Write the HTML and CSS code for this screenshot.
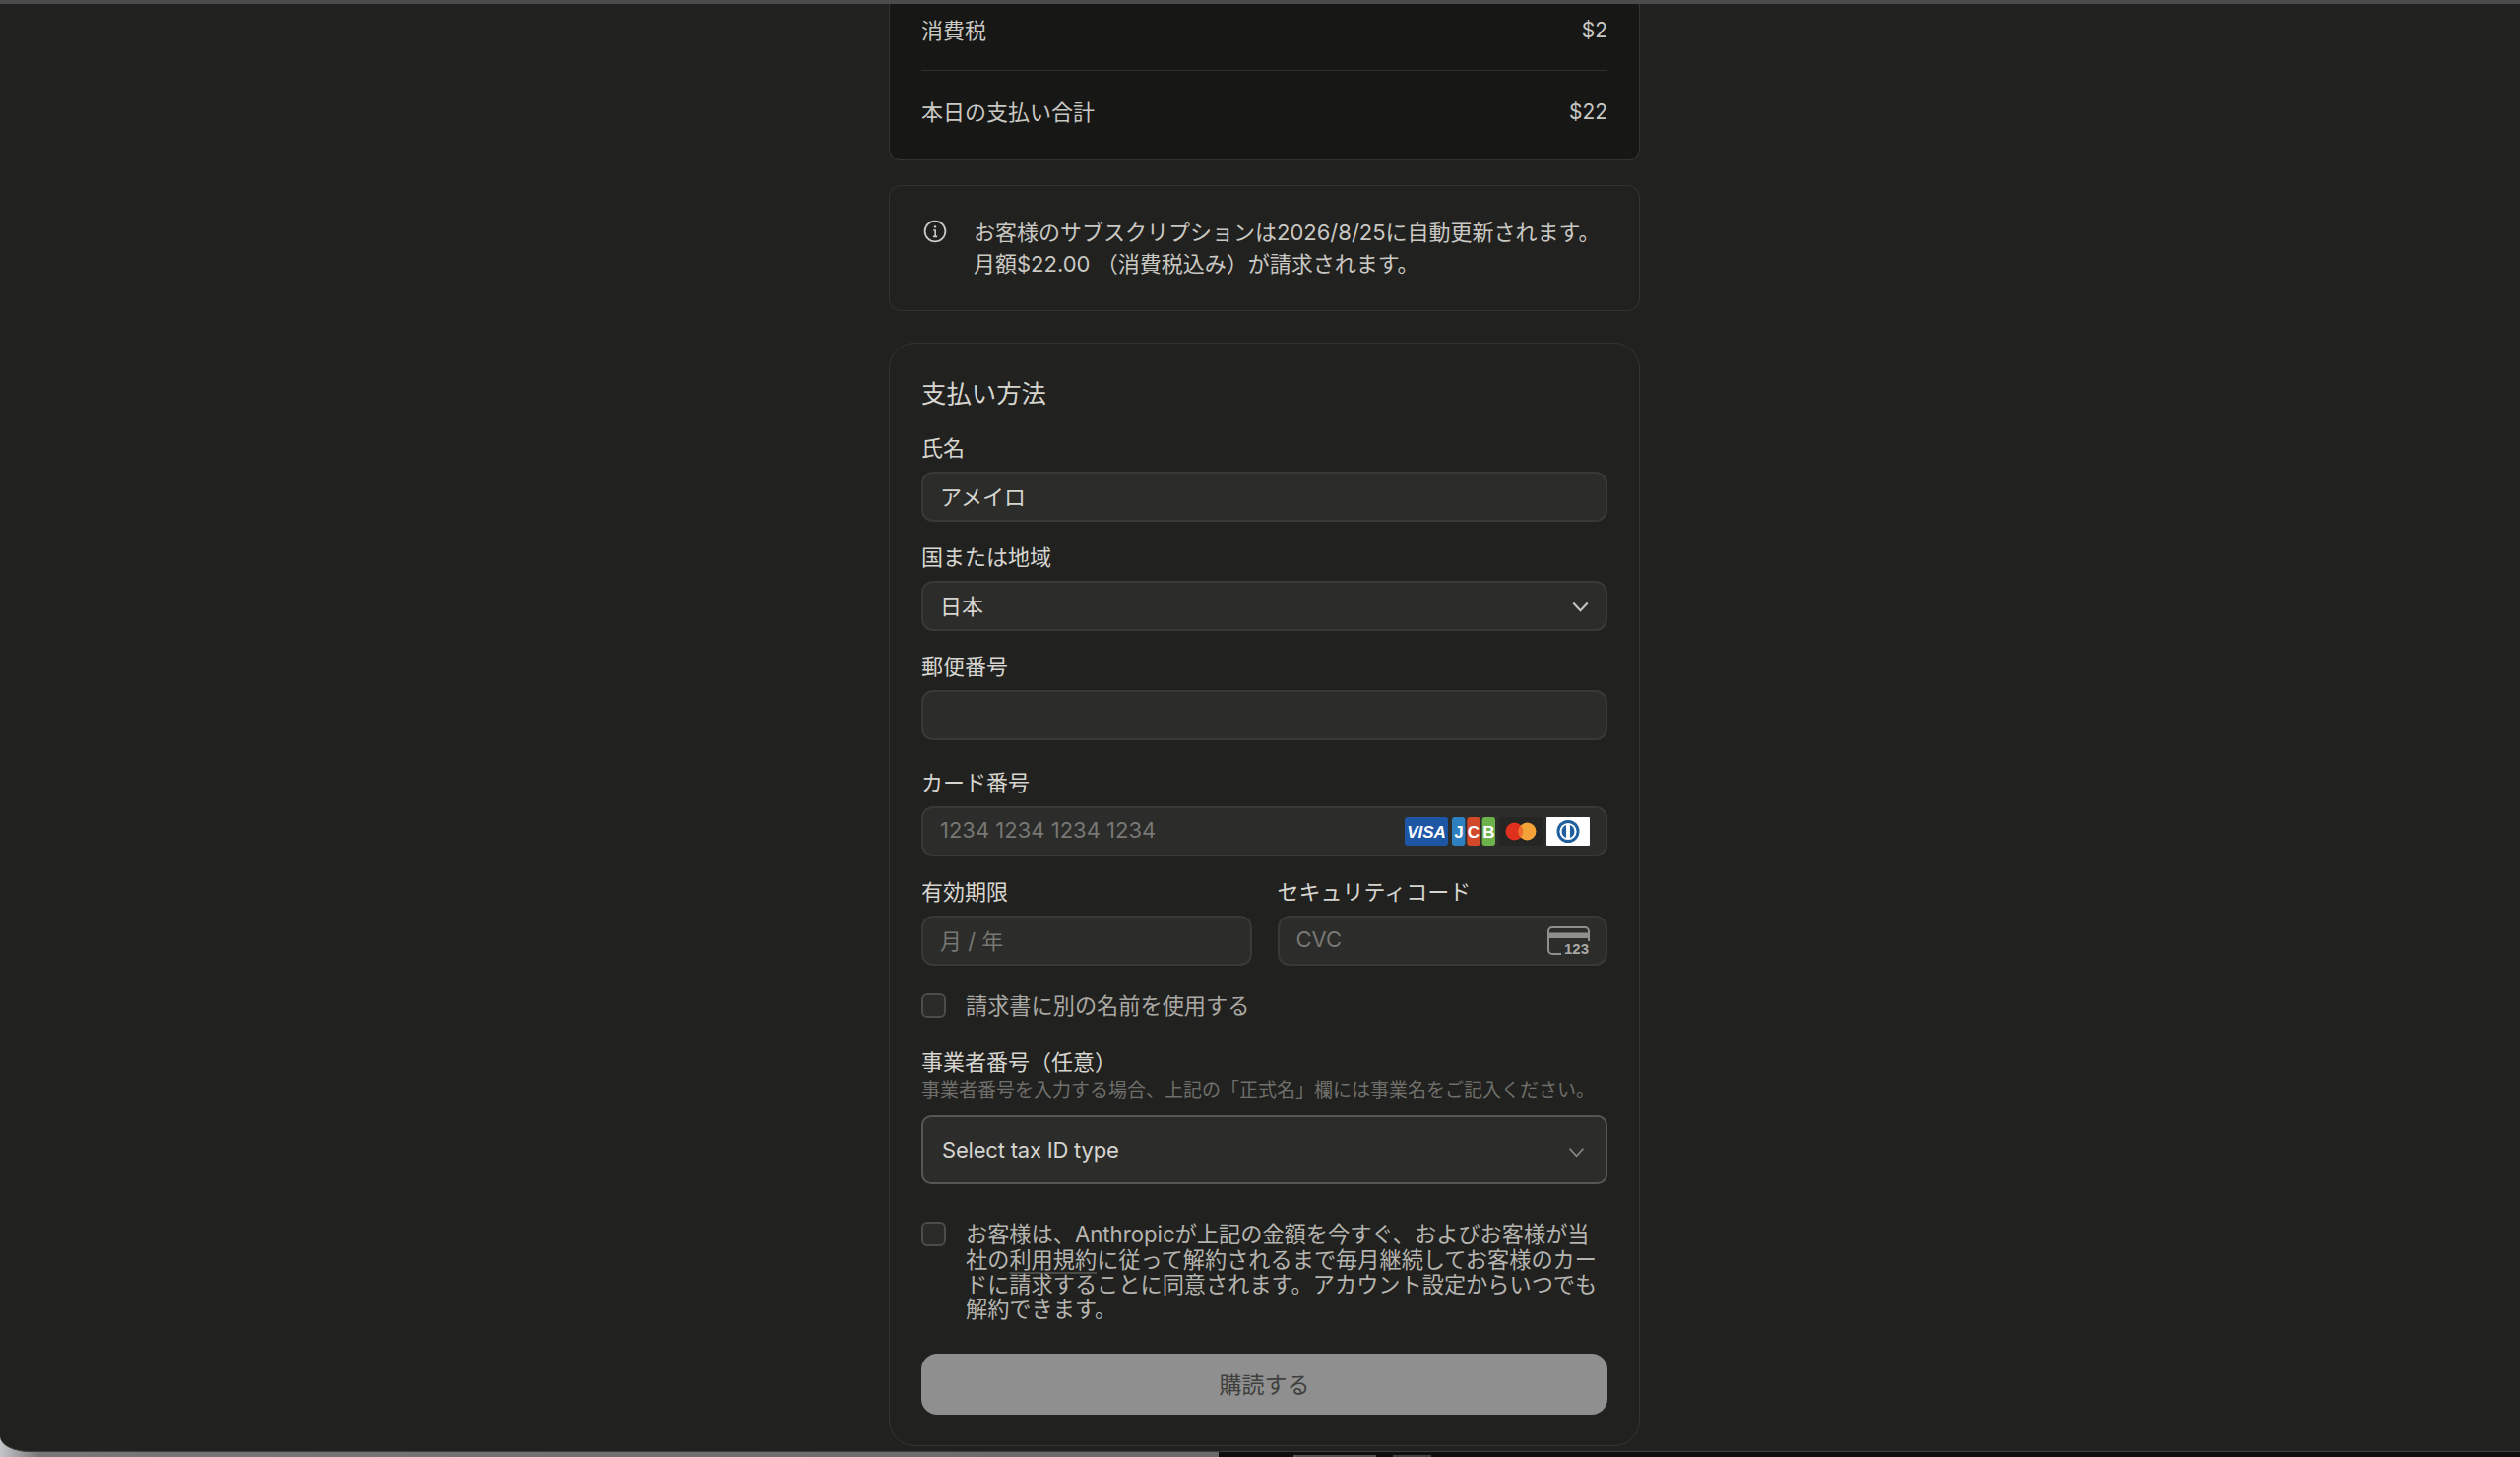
FILE: index.html
```html
<!DOCTYPE html>
<html lang="ja">
<head>
    <title>お支払い</title>
    <link rel="stylesheet" href="styles.css">
</head>
<body>
    <div class="window">
        <div class="column">
            <div class="summary">
                <div class="summary-row summary-tax">
                    <span>消費税</span>
                    <span class="amount">$2</span>
                </div>
                <div class="summary-row summary-total">
                    <span>本日の支払い合計</span>
                    <span class="amount">$22</span>
                </div>
            </div>

            <div class="notice">
                <svg class="notice-icon" viewBox="0 0 24 24" fill="none" stroke="#c9c8c3" stroke-width="1.8">
                    <circle cx="12" cy="12" r="10.4"/>
                    <path d="M10.2 11h2v6.4M10 17.4h4.2" stroke-width="1.6"/>
                    <circle cx="12" cy="7.4" r="1.2" fill="#c9c8c3" stroke="none"/>
                </svg>
                <p>お客様のサブスクリプションは2026/8/25に自動更新されます。<br>月額$22.00 （消費税込み）が請求されます。</p>
            </div>

            <div class="payment">
                <h2>支払い方法</h2>

                <div class="field field-first">
                    <label>氏名</label>
                    <div class="input">アメイロ</div>
                </div>

                <div class="field">
                    <label>国または地域</label>
                    <div class="input">
                        日本
                        <svg class="chevron" viewBox="0 0 16 10" fill="none" stroke="#c4c3be" stroke-width="2"><path d="M1.2 1.2 8 8.4l6.8-7.2"/></svg>
                    </div>
                </div>

                <div class="field">
                    <label>郵便番号</label>
                    <div class="input"></div>
                </div>

                <div class="field field-card">
                    <label>カード番号</label>
                    <div class="input placeholder">
                        1234 1234 1234 1234
                        <div class="card-logos">
                            <svg class="logo" viewBox="0 0 44 29">
                                <rect width="44" height="29" rx="3" fill="#1d56a5"/>
                                <text x="22" y="20.5" text-anchor="middle" class="logo-visa">VISA</text>
                            </svg>
                            <svg class="logo" viewBox="0 0 44 29">
                                <rect x="0" width="13.4" height="29" rx="3" fill="#2f80c0"/>
                                <rect x="15.3" width="13.4" height="29" rx="3" fill="#d2492a"/>
                                <rect x="30.6" width="13.4" height="29" rx="3" fill="#6eb24c"/>
                                <text x="7" y="21" text-anchor="middle" class="logo-jcb">J</text>
                                <text x="22" y="21" text-anchor="middle" class="logo-jcb">C</text>
                                <text x="37.3" y="21" text-anchor="middle" class="logo-jcb">B</text>
                            </svg>
                            <svg class="logo" viewBox="0 0 44 29">
                                <rect width="44" height="29" rx="3" fill="#252524"/>
                                <circle cx="15.5" cy="14.5" r="9" fill="#e0301e"/>
                                <circle cx="28.5" cy="14.5" r="9" fill="#f4a338"/>
                                <path d="M22 8.3a9 9 0 0 1 0 12.4a9 9 0 0 1 0-12.4z" fill="#ee6f2d"/>
                            </svg>
                            <svg class="logo" viewBox="0 0 44 29">
                                <rect width="44" height="29" rx="1" fill="#fff"/>
                                <circle cx="22" cy="14.5" r="11.5" fill="#1f5f9e"/>
                                <circle cx="22" cy="14.5" r="8.6" fill="#fff"/>
                                <path d="M20 8v13a7 7 0 0 1 0-13zM24 8v13a7 7 0 0 0 0-13z" fill="#1f5f9e"/>
                            </svg>
                        </div>
                    </div>
                </div>

                <div class="field-pair">
                    <div class="field">
                        <label>有効期限</label>
                        <div class="input placeholder">月 / 年</div>
                    </div>
                    <div class="field">
                        <label>セキュリティコード</label>
                        <div class="input placeholder">
                            CVC
                            <svg class="cvc-icon" viewBox="0 0 43 29" fill="none" stroke="#8f8f8b" stroke-width="2">
                                <path d="M14 28H5a4 4 0 0 1-4-4V5a4 4 0 0 1 4-4h33a4 4 0 0 1 4 4v10"/>
                                <rect x="1" y="6.5" width="41" height="5.5" fill="#8f8f8b" stroke="none"/>
                                <text x="42" y="28" text-anchor="end" class="cvc-text">123</text>
                            </svg>
                        </div>
                    </div>
                </div>

                <div class="check-row check-name">
                    <span class="checkbox"></span>
                    <span>請求書に別の名前を使用する</span>
                </div>

                <div class="tax-id">
                    <label>事業者番号（任意）</label>
                    <p class="hint">事業者番号を入力する場合、上記の「正式名」欄には事業名をご記入ください。</p>
                    <div class="tax-select">
                        Select tax ID type
                        <svg class="chevron" viewBox="0 0 16 10" fill="none" stroke="#8a8a87" stroke-width="1.6"><path d="M1.5 1.5 8 8.5l6.5-7"/></svg>
                    </div>
                </div>

                <div class="check-row check-terms">
                    <span class="checkbox"></span>
                    <span class="terms-text">お客様は、Anthropicが上記の金額を今すぐ、およびお客様が当社の<a class="terms-link">利用規約</a>に従って解約されるまで毎月継続してお客様のカードに請求することに同意されます。アカウント設定からいつでも解約できます。</span>
                </div>

                <div class="submit">購読する</div>
            </div>
        </div>
    </div>
    <div class="dock-hint"></div>
</body>
</html>
```

FILE: styles.css
```css
* {
    box-sizing: border-box;
}
html, body {
    margin: 0;
    height: 1480px;
    overflow: hidden;
}
body {
    font-family: "Inter", "Noto Sans CJK JP", sans-serif;
    font-size: 22px;
    color: #c9c8c3;
    position: relative;
    background: linear-gradient(90deg, #c3c6c8 0, #777 40px, #6a6a6a 1238px, #0e0e0e 1238px);
}
.window {
    height: 1475px;
    background: #21211f;
    border-top: 4px solid #4b4b4b;
    border-bottom: 1px solid #3f3f3e;
    border-bottom-left-radius: 30px 16px;
    padding-left: 903px;
}
.column {
    width: 763px;
}
.summary {
    background: #171716;
    border: 1px solid #343433;
    border-top: none;
    border-radius: 0 0 12px 12px;
    padding: 0 32px 32px;
}
.summary-row {
    display: flex;
    justify-content: space-between;
    line-height: 32px;
}
.summary-tax {
    padding: 11px 0 24px;
    border-bottom: 1px solid #2d2d2c;
}
.summary-total {
    padding-top: 26px;
}
.amount {
    font-size: 21px;
}
.notice {
    display: flex;
    margin-top: 25px;
    height: 128px;
    padding: 31px 20px 0 34px;
    border: 1px solid #343433;
    border-radius: 12px;
}
.notice-icon {
    width: 24px;
    height: 24px;
    margin: 3px 27px 0 0;
    flex-shrink: 0;
}
.notice p {
    margin: 0;
    line-height: 32px;
    white-space: nowrap;
}
.payment {
    margin-top: 32px;
    height: 1121px;
    padding: 33px 32px 0;
    border: 1px solid #343433;
    border-radius: 26px;
}
.payment h2 {
    margin: 0;
    font-size: 25.4px;
    font-weight: 400;
    line-height: 36px;
    color: #d6d5d0;
}
label {
    display: block;
    line-height: 28px;
    color: #d6d5d0;
}
.field {
    margin-top: 22px;
    flex: 1;
}
.field-first {
    margin-top: 23px;
}
.field-card {
    margin-top: 29px;
}
.input {
    display: flex;
    align-items: center;
    justify-content: space-between;
    height: 51px;
    margin-top: 10px;
    padding: 0 17px 3px 17px;
    background: #2c2c2b;
    border: 2px solid #393938;
    border-radius: 12px;
    color: #d6d5d0;
}
.placeholder {
    color: #777773;
}
.chevron {
    width: 17px;
    height: 11px;
    margin-top: 5px;
}
.card-logos {
    display: flex;
    gap: 4px;
    margin: 3px -1px 0 0;
}
.logo {
    width: 44px;
    height: 29px;
}
.logo-visa {
    font: italic 700 17px "Liberation Sans", sans-serif;
    fill: #fff;
}
.logo-jcb {
    font: 700 17px "Liberation Sans", sans-serif;
    fill: #fff;
}
.cvc-icon {
    width: 43px;
    height: 29px;
    margin: 3px -1px 0 0;
    overflow: visible;
}
.cvc-text {
    font: 700 15px "Liberation Sans", sans-serif;
    fill: #a9a9a5;
    stroke: #2c2c2b;
    stroke-width: 3px;
    paint-order: stroke;
}
.field-pair {
    display: flex;
    gap: 26px;
}
.check-row {
    display: flex;
    gap: 20px;
    line-height: 25.3px;
}
.check-name {
    margin-top: 28px;
    align-items: center;
    font-size: 22.2px;
    color: #a9a8a4;
}
.check-terms {
    margin-top: 38px;
    color: #b5b4af;
    font-size: 22.2px;
}
.terms-text {
    width: 650px;
}
.checkbox {
    width: 25px;
    height: 25px;
    flex-shrink: 0;
    background: #2a2a29;
    border: 2px solid #4c4c4b;
    border-radius: 6px;
}
.terms-link {
    text-decoration: underline;
    text-decoration-color: #4a4a46;
    text-underline-offset: 4px;
}
.tax-id {
    margin-top: 31px;
}
.hint {
    margin: 3px 0 0;
    font-size: 19px;
    line-height: 24px;
    color: #6f6f6b;
    white-space: nowrap;
}
.tax-select {
    display: flex;
    align-items: center;
    justify-content: space-between;
    height: 70px;
    margin-top: 13px;
    padding: 0 21px 0 19px;
    background: #2c2c2b;
    border: 2px solid #575756;
    border-radius: 10px;
    color: #d6d5d0;
    letter-spacing: -0.2px;
}
.submit {
    display: flex;
    align-items: center;
    justify-content: center;
    height: 62px;
    margin-top: 33px;
    padding-bottom: 3px;
    background: #8f8f8f;
    border-radius: 16px;
    color: #3f3f3e;
    font-size: 23px;
}
.dock-hint {
    position: absolute;
    left: 1314px;
    top: 1478px;
    width: 140px;
    height: 2px;
    background: linear-gradient(90deg, #555 0 60%, transparent 60% 72%, #444 72% 100%);
}
```
